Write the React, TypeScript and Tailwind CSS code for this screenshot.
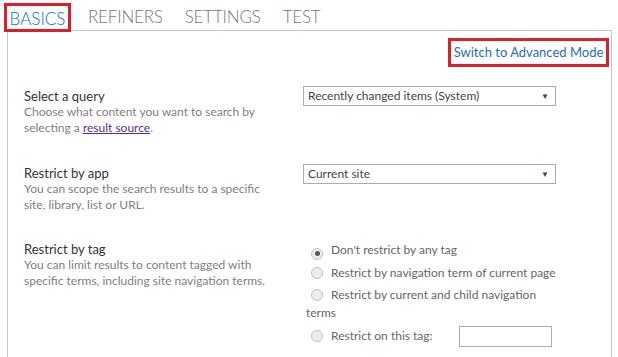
import React from 'react';

const tabs = ['REFINERS', 'SETTINGS', 'TEST'];

const radios = [
  { label: "Don't restrict by any tag", checked: true },
  { label: 'Restrict by navigation term of current page' },
  { label: 'Restrict by current and child navigation terms' },
];

function Radio({ checked }: { checked?: boolean }) {
  return (
    <span className="inline-flex items-center justify-center w-[12px] h-[12px] rounded-full border border-[#c2c2c2] bg-[#ededed] align-[-2px] ml-[5px] mr-[8px]">
      {checked && <span className="w-[5px] h-[5px] rounded-full bg-[#555]" />}
    </span>
  );
}

function Select({ value }: { value: string }) {
  return (
    <div className="flex items-center justify-between w-[253px] h-[20px] border border-[#ababab] bg-white pl-[4px] pr-[6px] text-[12px] text-[#444]">
      <span>{value}</span>
      <span className="text-[8px] text-[#444]">▼</span>
    </div>
  );
}

export default function App() {
  return (
    <div className="w-[618px] h-[357px] overflow-hidden bg-white font-['Lato',sans-serif] text-[13px] leading-[16px]">
      {/* Tabs */}
      <div className="flex items-start h-[30px]">
        <div className="relative z-10 mt-[3px] ml-[4px] h-[29px] w-[67px] border-[3px] border-[#d9202b] flex items-center justify-center text-[17px] font-light tracking-[0px] text-[#0072c6] leading-none pt-[1px]">
          BASICS
        </div>
        <div className="flex gap-[22px] ml-[17px] mt-[8px] text-[17px] font-light tracking-[-0.2px] leading-none text-[#777]">
          {tabs.map((t) => (
            <span key={t}>{t}</span>
          ))}
        </div>
      </div>

      {/* Panel */}
      <div className="ml-[7px] w-[605px] h-[400px] border-l border-t border-r border-[#c6c6c6]">
        <div className="flex justify-end pr-[2px] pt-[7px]">
          <div className="h-[29px] w-[161px] border-[3px] border-[#d9202b] flex items-center justify-center text-[#1e6ebf] pb-[2px]">
            Switch to Advanced Mode
          </div>
        </div>

        <div className="flex flex-col pl-[16px] mt-[19px]">
          <div className="flex h-[78px]">
            <div className="w-[279px] pt-[2px]">
              <div className="text-[#333]">Select a query</div>
              <div className="text-[#808080] text-[12px] w-[250px]">
                Choose what content you want to search by selecting a{' '}
                <span className="underline text-[#5c2d91]">result source</span>.
              </div>
            </div>
            <Select value="Recently changed items (System)" />
          </div>

          <div className="flex h-[76px]">
            <div className="w-[279px] pt-[1px]">
              <div className="text-[#333]">Restrict by app</div>
              <div className="text-[#808080] text-[12px] w-[245px]">
                You can scope the search results to a specific site, library, list or URL.
              </div>
            </div>
            <Select value="Current site" />
          </div>

          <div className="flex">
            <div className="w-[282px] pt-[1px]">
              <div className="text-[#333]">Restrict by tag</div>
              <div className="text-[#808080] text-[12px] w-[245px]">
                You can limit results to content tagged with specific terms, including site navigation terms.
              </div>
            </div>
            <div className="w-[254px] flex flex-col gap-[4px] text-[12px] text-[#666] leading-[18px] pt-[1px]">
              {radios.map((r) => (
                <div key={r.label}>
                  <Radio checked={r.checked} />
                  {r.label}
                </div>
              ))}
              <div className="flex items-center">
                <Radio />
                <span>Restrict on this tag:</span>
                <div className="ml-[26px] w-[93px] h-[21px] border border-[#ababab] bg-white" />
              </div>
            </div>
          </div>
        </div>
      </div>
    </div>
  );
}
